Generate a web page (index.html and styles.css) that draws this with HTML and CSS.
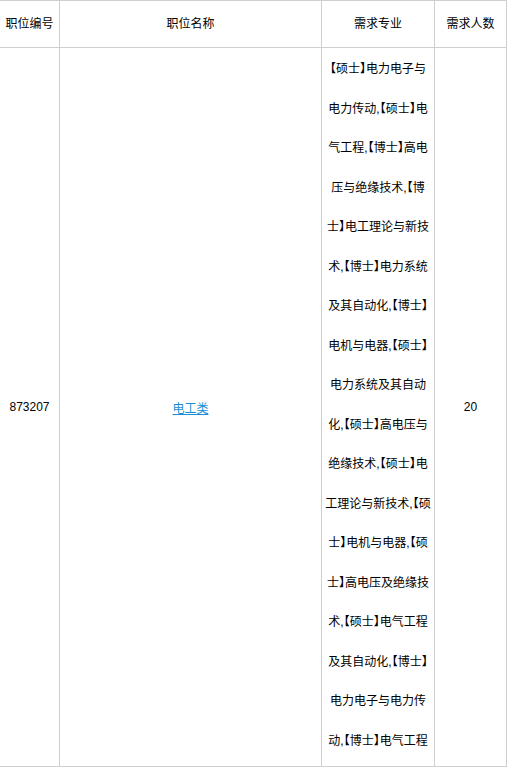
FILE: index.html
```html
<!DOCTYPE html>
<html lang="zh-CN">
<head>
<meta charset="utf-8">
<title>职位列表</title>
<link rel="stylesheet" href="styles.css">
</head>
<body>
<table class="jobs">
  <colgroup>
    <col class="c-id">
    <col class="c-name">
    <col class="c-major">
    <col class="c-num">
  </colgroup>
  <thead>
    <tr>
      <th>职位编号</th>
      <th>职位名称</th>
      <th>需求专业</th>
      <th>需求人数</th>
    </tr>
  </thead>
  <tbody>
    <tr>
      <td>873207</td>
      <td><a class="job-link" href="#">电工类</a></td>
      <td class="major">【硕士】电力电子与电力传动,【硕士】电气工程,【博士】高电压与绝缘技术,【博士】电工理论与新技术,【博士】电力系统及其自动化,【博士】电机与电器,【硕士】电力系统及其自动化,【硕士】高电压与绝缘技术,【硕士】电工理论与新技术,【硕士】电机与电器,【硕士】高电压及绝缘技术,【硕士】电气工程及其自动化,【博士】电力电子与电力传动,【博士】电气工程</td>
      <td>20</td>
    </tr>
  </tbody>
</table>
<div class="pager"></div>
</body>
</html>
```

FILE: styles.css
```css
html, body {
  margin: 0;
  padding: 0;
  background: #fff;
}

body {
  font-family: "Liberation Sans", "Noto Sans CJK SC", sans-serif;
  font-size: 12px;
  color: #000;
}

.jobs {
  width: 507px;
  table-layout: fixed;
  border-collapse: separate;
  border-spacing: 0;
  border-top: 1px solid #cfcfcf;
}

.c-id { width: 60px; }
.c-name { width: 262px; }
.c-major { width: 113px; }
.c-num { width: 72px; }

.jobs th,
.jobs td {
  border-right: 1px solid #cfcfcf;
  border-bottom: 1px solid #cfcfcf;
  text-align: center;
  padding: 0;
}

.jobs th {
  font-weight: normal;
  line-height: 46px;
  height: 46px;
}

.jobs td {
  vertical-align: middle;
}

.jobs td.major {
  line-height: 39.5px;
  padding: 2px 3px 5px;
  font-feature-settings: "halt" 1;
}

.job-link {
  color: #1a8dd6;
  text-decoration: underline;
}

.pager {
  width: 41px;
  height: 20px;
  margin: 0 0 0 230px;
  border: 1px solid #cfcfcf;
}
```
